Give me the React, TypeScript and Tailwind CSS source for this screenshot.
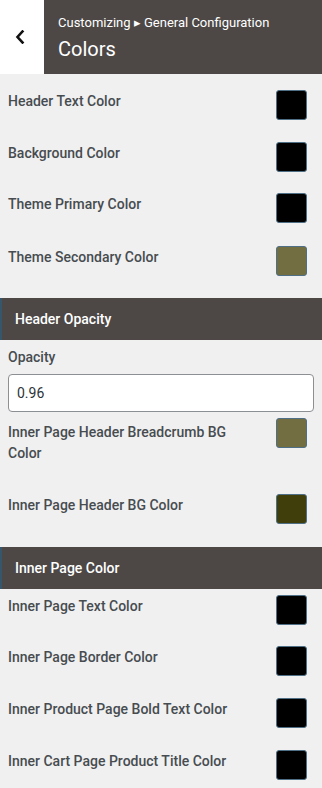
import React from "react";

function Swatch({ color }: { color: string }) {
  return (
    <div
      className="w-[31px] h-[30px] rounded-[3px] border border-[#4f6f86] shrink-0"
      style={{ backgroundColor: color }}
    />
  );
}

function Row({ label, color, className = "" }: { label: string; color: string; className?: string }) {
  return (
    <div className={`flex items-start justify-between pl-2 pr-[15px] ${className}`}>
      <div className="text-[14px] leading-[20px] font-medium text-[#474c50] pt-[1px]">{label}</div>
      <Swatch color={color} />
    </div>
  );
}

function Section({ title }: { title: string }) {
  return (
    <div className="h-[42px] bg-[#4d4846] border-l-2 border-[#36566c] flex items-center pl-[13px] text-white text-[14px] font-medium">
      {title}
    </div>
  );
}

export default function App() {
  return (
    <div
      className="w-[322px] h-[788px] bg-[#f0f0f0] overflow-hidden"
      style={{ fontFamily: "Roboto, 'Noto Sans', sans-serif" }}
    >
      <div className="flex h-[74px]">
        <div className="w-[44px] bg-white flex items-center justify-center">
          <svg width="10" height="14" viewBox="0 0 10 14" className="ml-[-4px]">
            <path d="M7.5 1.5 L2.5 7 L7.5 12.5" fill="none" stroke="#111" strokeWidth="2.6" strokeLinecap="square" />
          </svg>
        </div>
        <div className="flex-1 bg-[#4d4846] pl-[14px] pt-[14px]">
          <div className="text-[13px] leading-[18px] text-white">Customizing ▸ General Configuration</div>
          <div className="text-[20px] leading-[26px] text-white mt-[4px]">Colors</div>
        </div>
      </div>

      <Row label="Header Text Color" color="#000000" className="mt-[16px]" />
      <Row label="Background Color" color="#000000" className="mt-[22px]" />
      <Row label="Theme Primary Color" color="#000000" className="mt-[21px]" />
      <Row label="Theme Secondary Color" color="#736d42" className="mt-[23px]" />

      <div className="mt-[22px]">
        <Section title="Header Opacity" />
      </div>

      <div className="pl-2 pr-2 pt-[7px]">
        <div className="text-[14px] leading-[20px] font-medium text-[#474c50]">Opacity</div>
        <div className="mt-[7px] h-[38px] w-[306px] bg-white border border-[#8c8f94] rounded-[4px] flex items-center pl-[8px] text-[14px] text-[#2c3338]">
          0.96
        </div>
      </div>

      <div className="flex items-start justify-between pl-2 pr-[15px] mt-[6px]">
        <div className="text-[14px] leading-[21px] font-medium text-[#474c50] pt-[4px]">
          Inner Page Header Breadcrumb BG
          <br />
          Color
        </div>
        <Swatch color="#736d42" />
      </div>
      <Row label="Inner Page Header BG Color" color="#403e0b" className="mt-[30px]" />

      <div className="mt-[23px]">
        <Section title="Inner Page Color" />
      </div>

      <Row label="Inner Page Text Color" color="#000000" className="mt-[6px]" />
      <Row label="Inner Page Border Color" color="#000000" className="mt-[21px]" />
      <Row label="Inner Product Page Bold Text Color" color="#000000" className="mt-[22px]" />
      <Row label="Inner Cart Page Product Title Color" color="#000000" className="mt-[22px]" />
    </div>
  );
}
